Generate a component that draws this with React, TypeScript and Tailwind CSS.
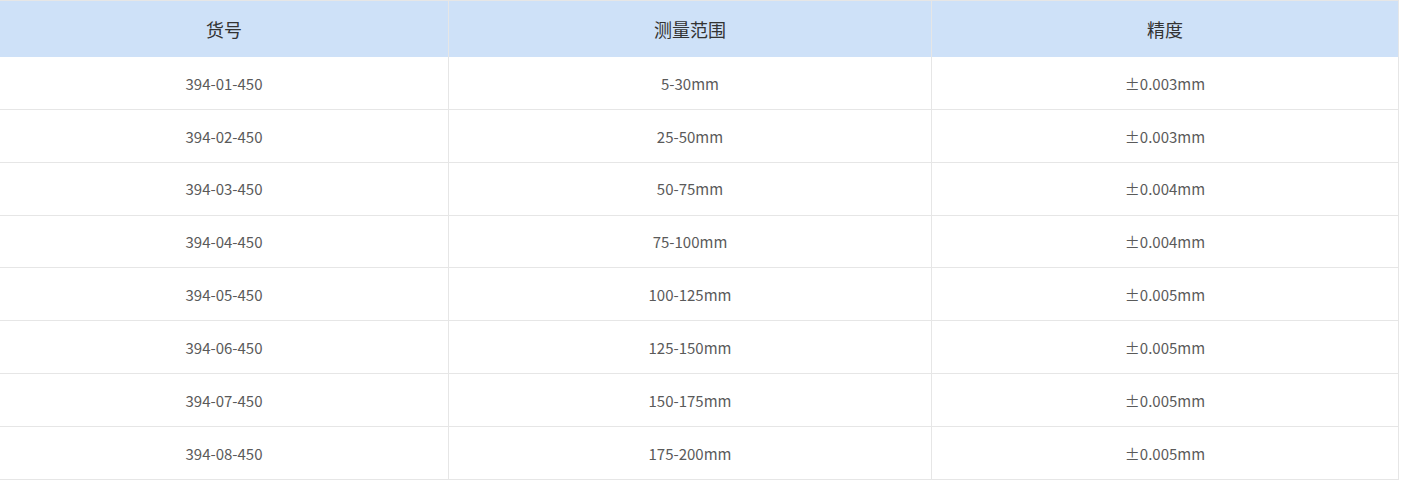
const rows = [
  ['394-01-450', '5-30mm', '±0.003mm'],
  ['394-02-450', '25-50mm', '±0.003mm'],
  ['394-03-450', '50-75mm', '±0.004mm'],
  ['394-04-450', '75-100mm', '±0.004mm'],
  ['394-05-450', '100-125mm', '±0.005mm'],
  ['394-06-450', '125-150mm', '±0.005mm'],
  ['394-07-450', '150-175mm', '±0.005mm'],
  ['394-08-450', '175-200mm', '±0.005mm'],
]

export default function App() {
  return (
    <div className="w-[1401px] h-[482px] bg-white font-['Noto_Sans_CJK_SC','Noto_Sans',sans-serif]">
      <div className="w-[1399px] border-t border-[#e6e6e6]">
        <div className="grid grid-cols-[449px_483px_467px] h-[56px] bg-[#cee1f8] text-[18px] text-[#333]">
          {['货号', '测量范围', '精度'].map(h => (
            <div key={h} className="flex items-center justify-center border-r border-[#e6e6e6]">{h}</div>
          ))}
        </div>
        {rows.map(r => (
          <div key={r[0]} className="grid grid-cols-[449px_483px_467px] h-[52.86px] border-b border-[#e6e6e6] text-[15px] text-[#5a5a5a]">
            {r.map((c, i) => (
              <div key={i} className="flex items-center justify-center pt-[2px] border-r border-[#e6e6e6]">{c}</div>
            ))}
          </div>
        ))}
      </div>
    </div>
  )
}
